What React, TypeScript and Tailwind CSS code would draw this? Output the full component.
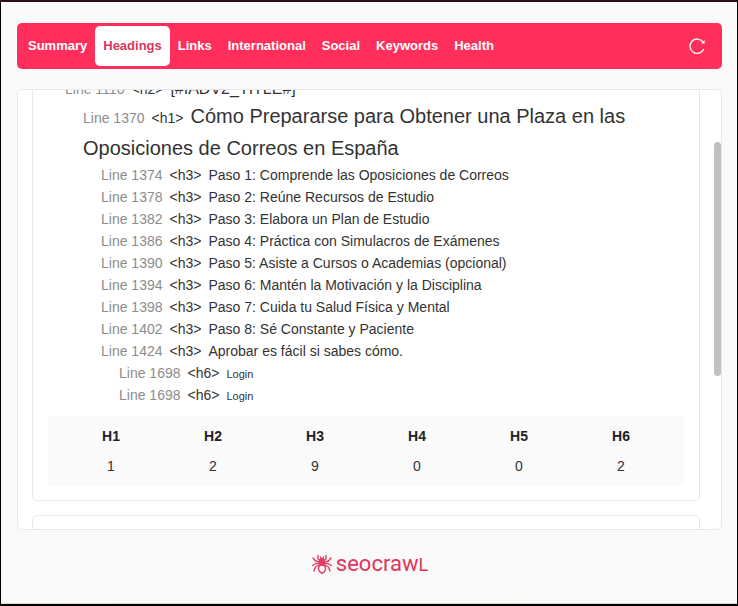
const tabs = ['Summary', 'Headings', 'Links', 'International', 'Social', 'Keywords', 'Health']

type Heading = {
  line: number
  tag: 'h1' | 'h2' | 'h3' | 'h6'
  text: string
}

const headings: Heading[] = [
  { line: 1110, tag: 'h2', text: '[#IADV2_TITLE#]' },
  { line: 1370, tag: 'h1', text: 'Cómo Prepararse para Obtener una Plaza en las Oposiciones de Correos en España' },
  { line: 1374, tag: 'h3', text: 'Paso 1: Comprende las Oposiciones de Correos' },
  { line: 1378, tag: 'h3', text: 'Paso 2: Reúne Recursos de Estudio' },
  { line: 1382, tag: 'h3', text: 'Paso 3: Elabora un Plan de Estudio' },
  { line: 1386, tag: 'h3', text: 'Paso 4: Práctica con Simulacros de Exámenes' },
  { line: 1390, tag: 'h3', text: 'Paso 5: Asiste a Cursos o Academias (opcional)' },
  { line: 1394, tag: 'h3', text: 'Paso 6: Mantén la Motivación y la Disciplina' },
  { line: 1398, tag: 'h3', text: 'Paso 7: Cuida tu Salud Física y Mental' },
  { line: 1402, tag: 'h3', text: 'Paso 8: Sé Constante y Paciente' },
  { line: 1424, tag: 'h3', text: 'Aprobar es fácil si sabes cómo.' },
  { line: 1698, tag: 'h6', text: 'Login' },
  { line: 1698, tag: 'h6', text: 'Login' },
]

const totals = [
  { level: 'H1', count: 1 },
  { level: 'H2', count: 2 },
  { level: 'H3', count: 9 },
  { level: 'H4', count: 0 },
  { level: 'H5', count: 0 },
  { level: 'H6', count: 2 },
]

const rowStyle = {
  h2: 'pl-[17px] text-base leading-[22px]',
  h1: 'pl-[35px] text-xl leading-8',
  h3: 'pl-[53px] text-sm leading-[22px]',
  h6: 'pl-[71px] text-sm leading-[22px]',
}

function SpiderIcon() {
  return (
    <svg viewBox="0 0 22 22" className="size-[22px]" fill="none" stroke="#e23d63" strokeWidth="1.4" strokeLinecap="round" strokeLinejoin="round" aria-hidden>
      {/* legs */}
      <path d="M9.500 7.500 7 6V2.500M12.500 7.500 15 6V2.500" />
      <path d="M9 9 4.500 8 2 5M13 9l4.500-1L20 5" />
      <path d="M9 10.500H5L1.500 12.500M13 10.500h4l3.500 2" />
      <path d="M9 11.500 4.500 14 3 18M13 11.500l4.500 2.500 1.500 4" />
      {/* abdomen */}
      <path d="M9.500 12C6.500 14.500 6.500 17.500 11 20.500c4.500-3 4.500-6 1.500-8.500" />
      <ellipse cx="11" cy="9" rx="2.500" ry="3.200" fill="#e23d63" />
      <path d="M10 5.500 9.500 4M12 5.500 12.500 4" />
    </svg>
  )
}

function Toolbar() {
  return (
    <nav className="flex h-[46px] items-center justify-between rounded-[5px] bg-[#ff2e5b] pr-4 pl-[3px]">
      <div className="flex">
        {tabs.map((tab) => (
          <button
            key={tab}
            type="button"
            className={`h-10 rounded-[5px] px-2 text-[13px] font-bold ${tab === 'Headings' ? 'bg-white text-[#d8345c]' : 'text-white'}`}
          >
            {tab}
          </button>
        ))}
      </div>
      <button type="button" aria-label="Reload" className="text-white">
        <svg viewBox="0 0 18 18" className="size-[18px]" fill="none" stroke="currentColor" strokeWidth="1.3" aria-hidden>
          <path d="M15.800 12A7.200 7.200 0 1 1 15 5" />
          <path d="M16.300 3.500v2.800h-2.500z" fill="currentColor" strokeWidth="0.5" />
        </svg>
      </button>
    </nav>
  )
}

export default function App() {
  return (
    <div className="flex h-screen flex-col border-x border-t-2 border-x-black border-t-[#2e0a1b] bg-[#fafafa] font-['Liberation_Sans',Arial,sans-serif] text-sm text-[#333]">
      <div className="flex min-h-0 flex-1 flex-col px-4 pt-[21px] pr-[15px]">
        <Toolbar />

        <main className="relative mt-5 min-h-0 flex-1 overflow-hidden rounded-[5px] border border-[#e6e8e8] bg-white pr-[21px] pl-[14px]">
          <section className="-mt-3 rounded-b-[5px] border border-t-0 border-[#e6e8e8] px-[15px] pb-[14px]">
            <ul>
              {headings.map((h, i) => (
                <li key={i} className={rowStyle[h.tag]}>
                  <span className="mr-[7px] text-sm leading-none text-[#8c8c8c]">Line {h.line}</span>
                  <span className="mr-[7px] text-sm leading-none">&lt;{h.tag}&gt;</span>
                  <span className={h.tag === 'h6' ? 'text-[11px] leading-none' : ''}>{h.text}</span>
                </li>
              ))}
            </ul>

            <div className="mt-[10px] bg-[#fafafa] px-3 py-[5px]">
              <table className="w-full table-fixed text-center">
                <thead>
                  <tr className="h-[30px] text-[#222]">
                    {totals.map((t) => (
                      <th key={t.level} scope="col">{t.level}</th>
                    ))}
                  </tr>
                </thead>
                <tbody>
                  <tr className="h-[30px]">
                    {totals.map((t) => (
                      <td key={t.level}>{t.count}</td>
                    ))}
                  </tr>
                </tbody>
              </table>
            </div>
          </section>

          <section className="mt-[14px] h-20 rounded-[5px] border border-[#e6e8e8]" />

          {/* scroll thumb */}
          <div className="absolute top-[52px] right-0 h-[234px] w-[7px] rounded-full bg-[#c1c1c1]" />
        </main>

        <footer className="flex h-[73px] items-center justify-center gap-[3px] pb-[6px]">
          <SpiderIcon />
          <span className="font-['Roboto',sans-serif] text-[22px] leading-6 text-[#e0355c]">
            seocraw<span className="text-lg leading-none">L</span>
          </span>
        </footer>
      </div>
      <div className="h-px bg-linear-to-r from-[#e9dfae] via-[#ded6b8] to-[#d8d5dc]" />
      <div className="h-[2px] bg-black" />
    </div>
  )
}
